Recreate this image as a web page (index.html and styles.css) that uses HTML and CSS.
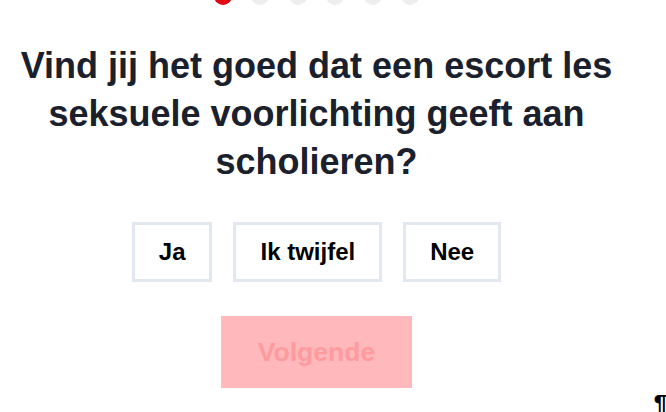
FILE: index.html
```html
<!DOCTYPE html>
<html lang="nl">
<head>
<meta charset="utf-8">
<link rel="stylesheet" href="styles.css">
</head>
<body>
<div class="page">
  <div class="dots">
    <span class="dot active"></span>
    <span class="dot"></span>
    <span class="dot"></span>
    <span class="dot"></span>
    <span class="dot"></span>
    <span class="dot"></span>
  </div>
  <h1 class="question">Vind jij het goed dat een escort les seksuele voorlichting geeft aan scholieren?</h1>
  <div class="answers">
    <button class="answer">Ja</button>
    <button class="answer">Ik twijfel</button>
    <button class="answer">Nee</button>
  </div>
  <button class="next" disabled>Volgende</button>
</div>
<span class="pilcrow">¶</span>
</body>
</html>
```
FILE: styles.css
```css
html, body {
  margin: 0;
  padding: 0;
  background: #fff;
  overflow: hidden;
  height: 412px;
}
body {
  font-family: "Liberation Sans", Arial, sans-serif;
  position: relative;
}
.page {
  width: 633px;
  display: flex;
  flex-direction: column;
  align-items: center;
  margin-top: -13px;
}
.dots {
  display: flex;
  gap: 19.5px;
}
.dot {
  width: 18px;
  height: 18px;
  border-radius: 50%;
  background: #eeeeee;
}
.dot.active {
  background: #e30613;
}
.question {
  margin: 37px 0 0;
  font-size: 36px;
  line-height: 48px;
  font-weight: 700;
  color: #1a202c;
  text-align: center;
  width: 610px;
}
.answers {
  display: flex;
  gap: 21px;
  margin-top: 36px;
}
.answer {
  font-family: "Liberation Sans", Arial, sans-serif;
  font-size: 24px;
  font-weight: 700;
  color: #000;
  background: #fff;
  border: 3px solid #e2e8f0;
  height: 60px;
  padding: 0 24px;
}
.next {
  margin-top: 34px;
  width: 191px;
  height: 72px;
  border: 0;
  background: #ffb8bb;
  color: #ff9a9f;
  font-family: "Liberation Sans", Arial, sans-serif;
  font-size: 26.5px;
  font-weight: 700;
}
.pilcrow {
  position: absolute;
  right: -1px;
  bottom: -6px;
  font-size: 24px;
  line-height: 28px;
  font-weight: 700;
  color: #000;
}
```
